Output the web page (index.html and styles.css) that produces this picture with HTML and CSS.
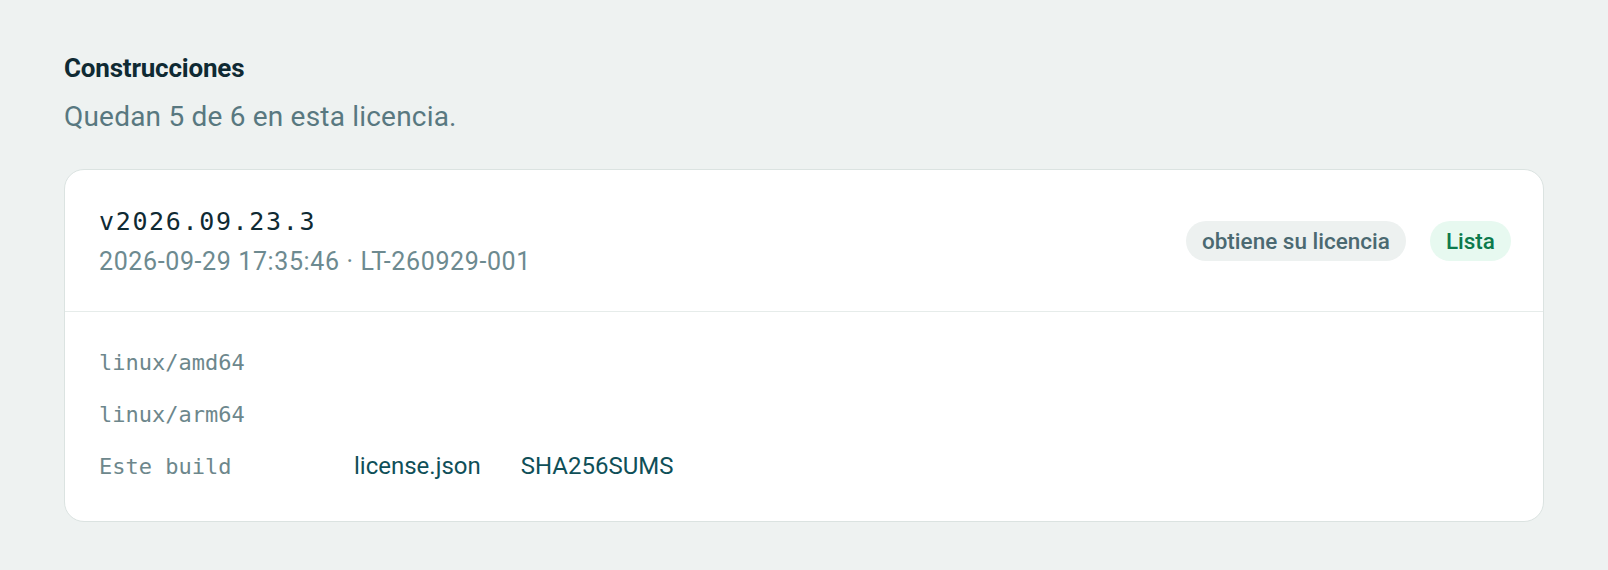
FILE: index.html
```html
<!DOCTYPE html>
<html lang="es">
<head>
<meta charset="utf-8">
<title>Construcciones</title>
<link rel="stylesheet" href="styles.css">
</head>
<body>
<main class="page">
  <section class="builds">
    <h2 class="builds-title">Construcciones</h2>
    <p class="builds-sub">Quedan 5 de 6 en esta licencia.</p>
    <article class="card">
      <header class="card-head">
        <div class="card-id">
          <div class="version">v2026.09.23.3</div>
          <div class="meta">2026-09-29 17:35:46 · LT-260929-001</div>
        </div>
        <div class="badges">
          <span class="badge badge-muted">obtiene su licencia</span>
          <span class="badge badge-ok">Lista</span>
        </div>
      </header>
      <div class="card-body">
        <div class="row"><span class="label">linux/amd64</span></div>
        <div class="row"><span class="label">linux/arm64</span></div>
        <div class="row">
          <span class="label">Este build</span>
          <div class="links">
            <a class="link" href="#">license.json</a>
            <a class="link" href="#">SHA256SUMS</a>
          </div>
        </div>
      </div>
    </article>
  </section>
</main>
</body>
</html>
```

FILE: styles.css
```css
* { box-sizing: border-box; }

html, body {
  margin: 0;
  padding: 0;
  background: #eef2f1;
}

body {
  font-family: Roboto, "Liberation Sans", sans-serif;
  color: #0f2a33;
}

.page {
  padding: 52px 64px 48px 64px;
}

.builds-title {
  margin: 0;
  font-size: 26px;
  line-height: 32px;
  font-weight: 700;
  letter-spacing: -0.2px;
  color: #0f2a33;
}

.builds-sub {
  margin: 15px 0 0 0;
  font-size: 28px;
  line-height: 36px;
  letter-spacing: 0.2px;
  color: #587880;
}

.card {
  margin-top: 34px;
  background: #ffffff;
  border: 1px solid #dbe3e1;
  border-radius: 20px;
}

.card-head {
  display: flex;
  align-items: center;
  justify-content: space-between;
  padding: 34px 32px 33px 34px;
  border-bottom: 1px solid #e6ecea;
}

.version {
  font-family: "DejaVu Sans Mono", "Liberation Mono", monospace;
  font-size: 25px;
  line-height: 36px;
  letter-spacing: 1.65px;
  color: #0f2a33;
}

.meta {
  margin-top: 6px;
  font-size: 25px;
  line-height: 32px;
  letter-spacing: 0.62px;
  color: #6d8a90;
}

.badges {
  display: flex;
  align-items: center;
  gap: 24px;
}

.badge {
  display: inline-flex;
  align-items: center;
  height: 40px;
  padding: 0 16px;
  border-radius: 20px;
  font-size: 22.5px;
  font-weight: 500;
}

.badge-muted {
  background: #edf1f0;
  color: #4b6971;
}

.badge-ok {
  background: #e7f9f0;
  color: #0c7a4c;
}

.card-body {
  display: flex;
  flex-direction: column;
  gap: 12px;
  padding: 30px 32px 35px 34px;
}

.row {
  display: flex;
  align-items: center;
  height: 40px;
}

.label {
  width: 255px;
  font-family: "DejaVu Sans Mono", "Liberation Mono", monospace;
  font-size: 22px;
  color: #6d878c;
}

.links {
  display: flex;
  gap: 40px;
}

.link {
  font-size: 24px;
  color: #0f4f58;
  text-decoration: none;
}
```
